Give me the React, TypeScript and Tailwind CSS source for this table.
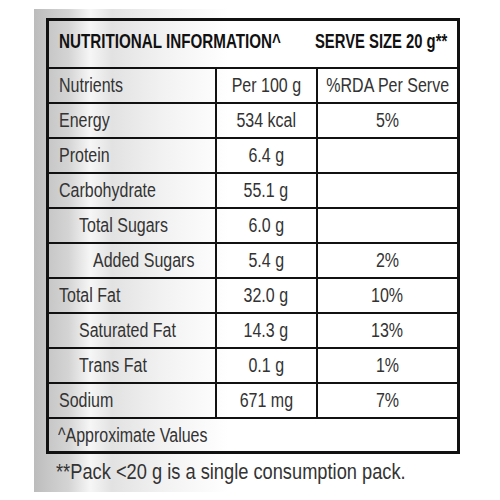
const rows: [string, string, string, number][] = [
  ["Energy", "534 kcal", "5%", 0],
  ["Protein", "6.4 g", "", 0],
  ["Carbohydrate", "55.1 g", "", 0],
  ["Total Sugars", "6.0 g", "", 1],
  ["Added Sugars", "5.4 g", "2%", 2],
  ["Total Fat", "32.0 g", "10%", 0],
  ["Saturated Fat", "14.3 g", "13%", 1],
  ["Trans Fat", "0.1 g", "1%", 1],
  ["Sodium", "671 mg", "7%", 0],
];

const indent = ["pl-[10px]", "pl-[30px]", "pl-[44px]"];

function L({ children }: { children: React.ReactNode }) {
  return <span className="inline-block origin-left scale-x-[0.8] whitespace-nowrap">{children}</span>;
}

function C({ children }: { children: React.ReactNode }) {
  return (
    <div className="flex justify-center">
      <span className="shrink-0 origin-center scale-x-[0.8] whitespace-nowrap">{children}</span>
    </div>
  );
}

const cell = "border-2 border-[#111] leading-none";

export default function App() {
  return (
    <div className="w-[500px] h-[500px] overflow-hidden bg-white pl-[34px] pt-[9px] font-['Liberation_Sans',Arial,sans-serif] text-[#333]">
      <div className="w-[432px] h-[483px] pl-[12px] pt-[9px] bg-[linear-gradient(to_right,#bcbcbc_0%,#c6c6c6_3%,#d4d4d4_8%,#f6f6f6_13%,#e2e2e2_18%,#f2f2f2_30%,#ffffff_45%,#ffffff_100%)]">
        <table className="w-[411px] table-fixed border-collapse border-[3px] border-[#111]">
          <colgroup>
            <col className="w-[168px]" />
            <col className="w-[101px]" />
            <col className="w-[142px]" />
          </colgroup>
          <tbody>
            <tr className="h-[48px]">
              <td colSpan={3} className={`${cell} pl-[10px] pb-[5px] text-[#111] font-bold text-[20px]`}>
                <div className="flex whitespace-nowrap">
                  <div className="w-[256px] shrink-0">
                    <span className="inline-block origin-left scale-x-[0.76]">NUTRITIONAL INFORMATION^</span>
                  </div>
                  <div className="w-0 grow">
                    <span className="inline-block origin-left scale-x-[0.74]">SERVE SIZE 20 g**</span>
                  </div>
                </div>
              </td>
            </tr>
            <tr className="h-[35px] text-[20px]">
              <td className={`${cell} pl-[10px]`}><L>Nutrients</L></td>
              <td className={cell}><C>Per 100 g</C></td>
              <td className={cell}><C>%RDA Per Serve</C></td>
            </tr>
            {rows.map(([name, per, rda, lvl]) => (
              <tr key={name} className="h-[35px] text-[20px]">
                <td className={`${cell} ${indent[lvl]}`}><L>{name}</L></td>
                <td className={cell}><C>{per}</C></td>
                <td className={cell}><C>{rda}</C></td>
              </tr>
            ))}
            <tr className="h-[35px] text-[20px]">
              <td colSpan={3} className={`${cell} pl-[9px]`}><L>^Approximate Values</L></td>
            </tr>
          </tbody>
        </table>
        <p className="mt-[7px] pl-[10px] text-[22px] leading-none text-[#333]">
          <span className="inline-block origin-left scale-x-[0.83] whitespace-nowrap">**Pack &lt;20 g is a single consumption pack.</span>
        </p>
      </div>
    </div>
  );
}
